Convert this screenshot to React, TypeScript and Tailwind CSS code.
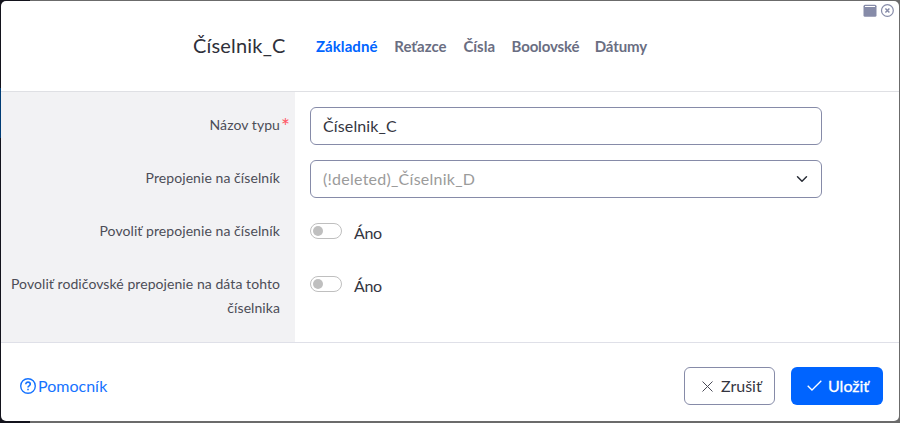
import type { ReactNode } from "react";

const tabs = [
  { label: "Základné", style: "w-[62px] text-[#0064ff] tracking-[0.06px]" },
  { label: "Reťazce", style: "w-[53px] text-[#6a6e82] tracking-[0.05px]" },
  { label: "Čísla", style: "w-[32px] text-[#6a6e82] tracking-[0px]" },
  { label: "Boolovské", style: "w-[67px] text-[#6a6e82] tracking-[-0.15px]" },
  { label: "Dátumy", style: "w-[53px] text-[#6a6e82] tracking-[-0.1px]" },
];

function Row({ label, children, tall = false, required = false }: { label: string; children: ReactNode; tall?: boolean; required?: boolean }) {
  return (
    <div className={tall ? "flex h-[76px]" : "flex h-[53px]"}>
      <div className="relative w-[294px] shrink-0 pr-[15px] pl-[5px] pt-[6px] text-right text-[14px] leading-6 tracking-[0.07px] text-[#4c4d57]">
        {label}
        {required && <span className="absolute top-[7px] left-[280px] text-[21px] text-[#ff5964]">*</span>}
      </div>
      <div className="pl-[15px]">{children}</div>
    </div>
  );
}

function Toggle() {
  return (
    <div className="flex">
      <span className="mt-[10px] flex h-4 w-8 items-center rounded-full border border-[#bfbfbf] pl-[2px]">
        <span className="size-[10px] rounded-full bg-[#bfbfbf]" />
      </span>
      <span className="ml-3 mt-[8px] text-[16px] leading-6 tracking-[-0.4px] text-[#34353f]">Áno</span>
    </div>
  );
}

export default function App() {
  return (
    <div className="h-[423px] w-[900px] overflow-hidden bg-[linear-gradient(90deg,#13131c_30px,#6b6b6b_30px)] font-['Lato','Noto_Sans',sans-serif]">
      <div className="h-[423px] bg-[linear-gradient(#003c75,#003c75)] bg-[length:1px_50px] bg-[position:0_88px] bg-no-repeat px-px pt-px">
        <div className="relative flex h-[420px] flex-col overflow-hidden rounded-[5px] bg-white">
          <header className="flex h-[91px] shrink-0 items-center border-b border-[#dfe0e4] pl-[192px]">
            <h1 className="-mt-[2px] w-[93px] whitespace-nowrap text-[20px] leading-6 tracking-[0.18px] text-[#2f303a]">Číselnik_C</h1>
            <nav className="ml-[30px] flex gap-[16.2px]">
              {tabs.map((tab) => (
                <span key={tab.label} className={`whitespace-nowrap text-[15px] font-bold leading-5 ${tab.style}`}>{tab.label}</span>
              ))}
            </nav>
            <div className="absolute top-[3px] right-[5px] flex gap-[3px]">
              <svg width="14" height="13" viewBox="0 0 14 13">
                <rect x=".5" y=".7" width="13" height="12" rx="1.5" fill="#868ba8" />
                <path d="M2 2.5h10" stroke="white" strokeWidth="1.2" />
              </svg>
              <svg width="14" height="13" viewBox="0 0 14 13" fill="none" stroke="#868ba8">
                <circle cx="7.4" cy="6.5" r="5.9" strokeWidth="1.2" />
                <path d="m5.4 4.5 4 4m0-4-4 4" strokeWidth="1.5" />
              </svg>
            </div>
          </header>
          <main className="h-[250px] shrink-0 bg-[linear-gradient(90deg,#f2f2f4_294px,white_294px)] pt-[15px]">
            <Row label="Názov typu" required>
              <div className="flex h-[38px] w-[512px] items-center rounded-md border border-[#868ba8] px-3 text-[16px] tracking-[0.12px] text-[#34353f]">Číselnik_C</div>
            </Row>
            <Row label="Prepojenie na číselník">
              <div className="flex h-[38px] w-[512px] items-center justify-between rounded-md border border-[#868ba8] px-3 text-[16px] tracking-[0.25px] text-[#9b9b9b]">
                (!deleted)_Číselnik_D
                <svg className="mr-px" width="12" height="12" viewBox="0 0 16 16" fill="none" stroke="#2b2f38" strokeWidth="2" strokeLinecap="round" strokeLinejoin="round">
                  <path d="m2 5 6 6 6-6" />
                </svg>
              </div>
            </Row>
            <Row label="Povoliť prepojenie na číselník"><Toggle /></Row>
            <Row label="Povoliť rodičovské prepojenie na dáta tohto číselnika" tall><Toggle /></Row>
          </main>
          <footer className="flex h-[79px] items-center border-t border-[#dfe0e8] pt-[8px] pr-[16px] pb-px pl-[19px] text-[16px]">
            <a className="flex items-center gap-[2px] text-[#1673ff]">
              <svg width="16" height="16" viewBox="0 0 16 16" fill="none" stroke="currentColor">
                <circle cx="8" cy="8" r="7.3" strokeWidth="1.4" />
                <path d="M5.8 6.3c0-3 4.5-2.7 4.5 0C10.3 7.8 8 7.8 8 9.4M8 10.7v1.6" strokeWidth="1.6" />
              </svg>
              <span>Pomocník</span>
            </a>
            <button className="ml-auto flex h-[38px] w-[91px] items-center rounded-md border border-[#868ba8] pl-[17px] text-[#34353f]">
              <svg className="mt-px" width="11" height="11" viewBox="0 0 11 11" stroke="#4a4b57" strokeWidth="1"><path d="m.5.5 10 10m0-10-10 10" /></svg>
              <span className="ml-[8px]">Zrušiť</span>
            </button>
            <button className="ml-4 flex h-[38px] w-[92px] items-center rounded-md bg-[#0064ff] pl-[16px] text-white">
              <svg width="15" height="11" viewBox="0 0 15 11" fill="none" stroke="white" strokeWidth="1.3"><path d="m.7 5.7 4.3 4.3L14.3.7" /></svg>
              <span className="ml-[6px] [-webkit-text-stroke:0.3px_white]">Uložiť</span>
            </button>
          </footer>
        </div>
      </div>
    </div>
  );
}
